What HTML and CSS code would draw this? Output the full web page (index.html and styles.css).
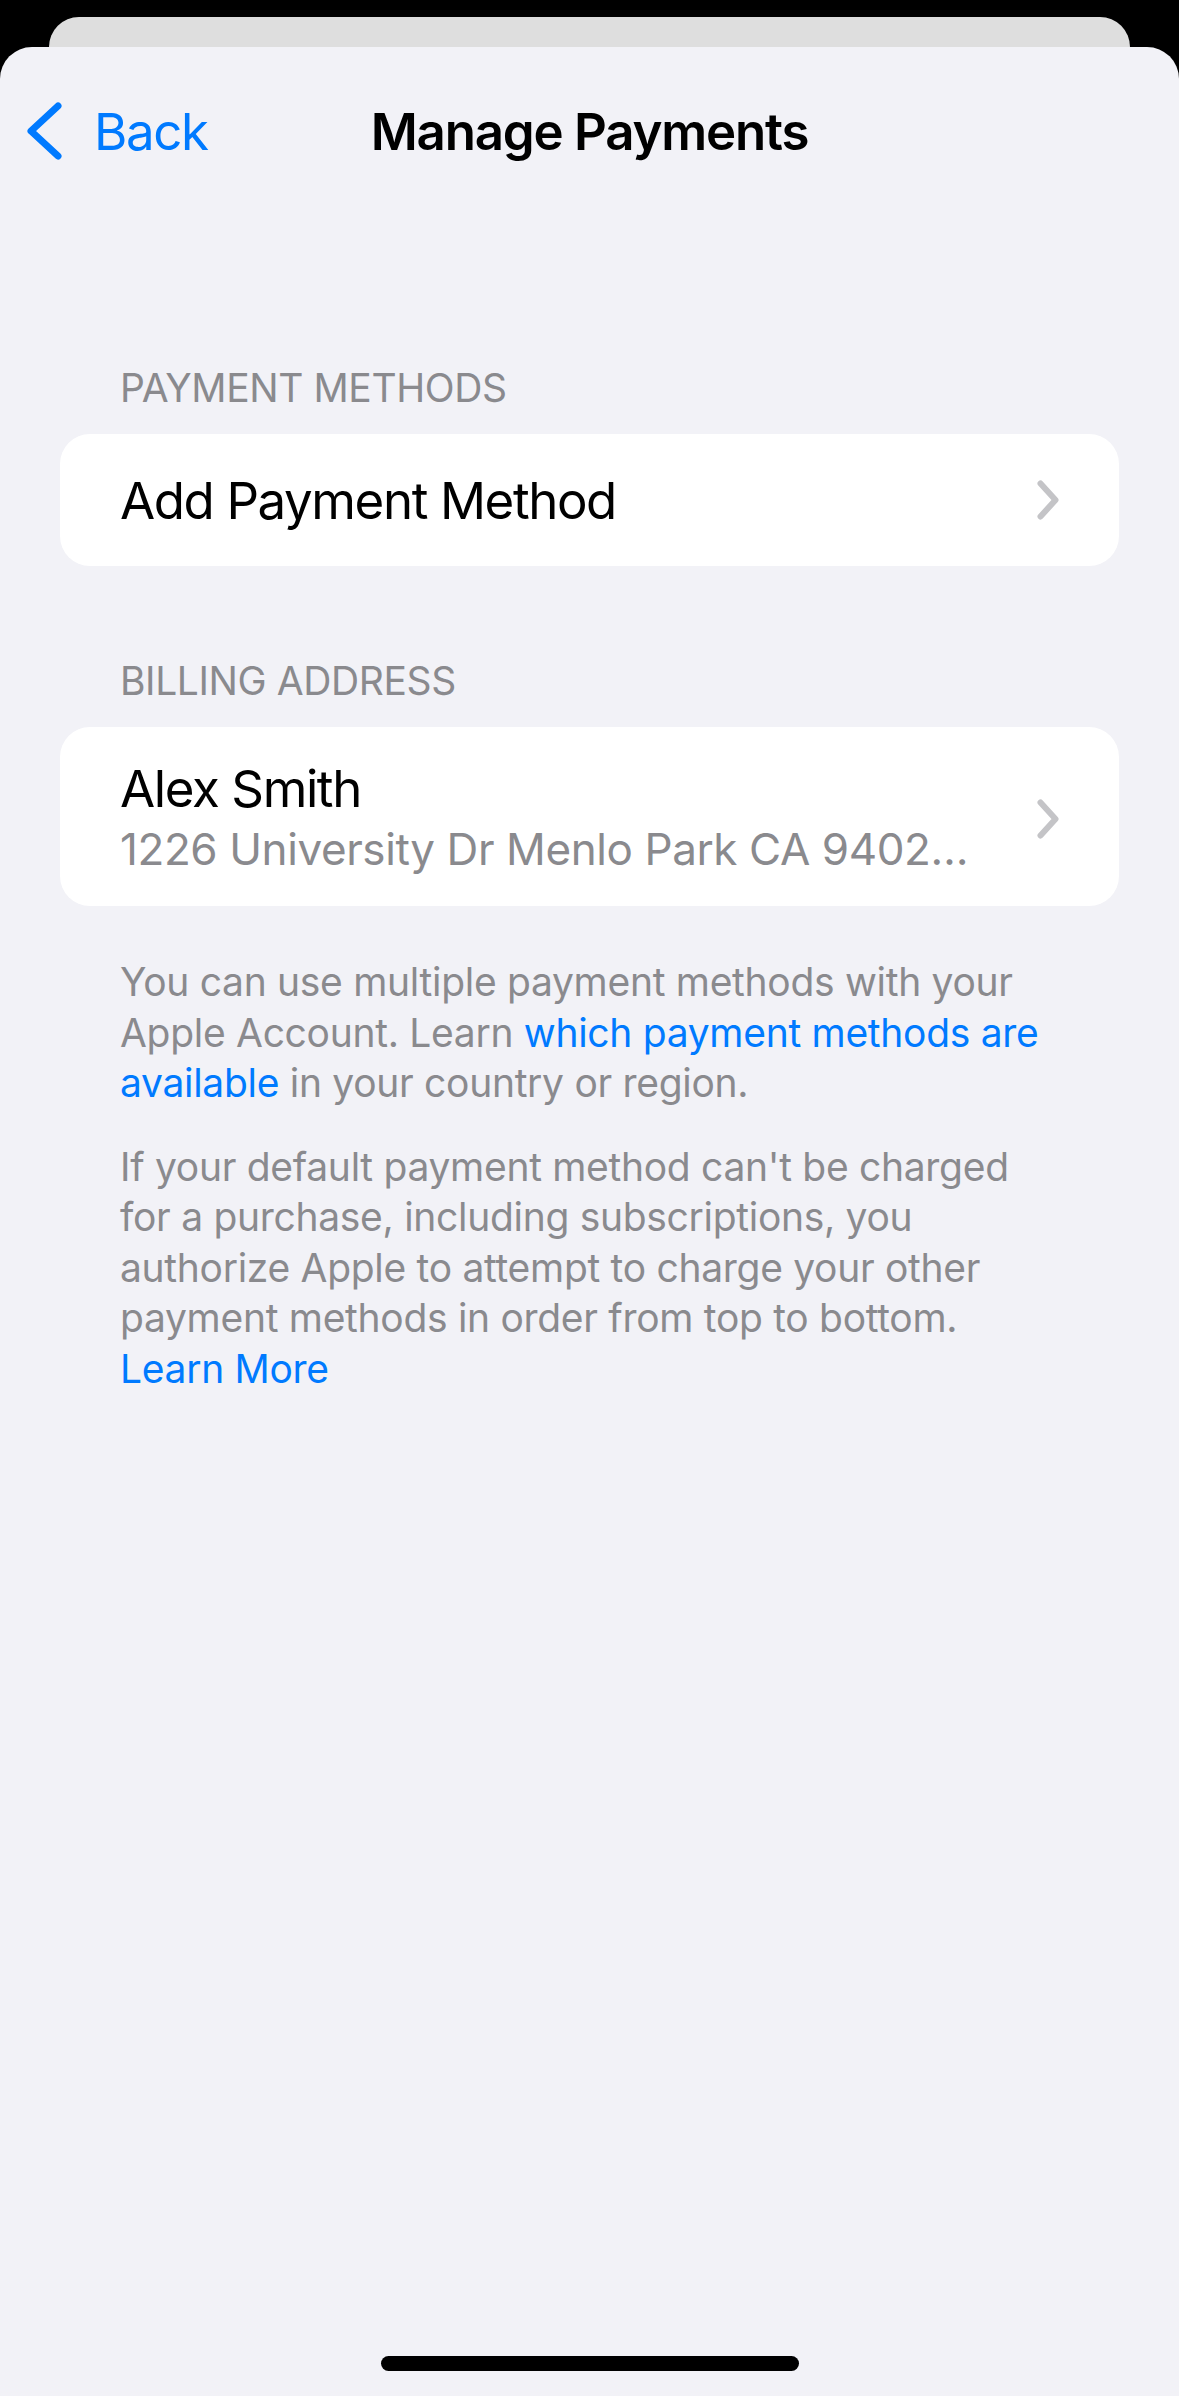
FILE: index.html
```html
<!DOCTYPE html>
<html lang="en">
<head>
    <meta charset="UTF-8">
    <meta name="viewport" content="width=device-width, initial-scale=1.0">
    <title>Manage Payments</title>
    <link rel="stylesheet" href="styles.css">
</head>
<body>
    <div class="back-sheet"></div>
    <div class="sheet">
        <header class="nav">
            <a class="nav-back" href="#">
                <svg class="nav-back-icon" width="40" height="62" viewBox="0 0 40 62">
                    <polyline points="34,6 7,31 34,56" fill="none" stroke="#007aff" stroke-width="7" stroke-linecap="round" stroke-linejoin="round"/>
                </svg>
                <span>Back</span>
            </a>
            <h1 class="nav-title">Manage Payments</h1>
            <span></span>
        </header>

        <main class="content">
            <section class="group">
                <h2 class="group-header">Payment Methods</h2>
                <div class="card">
                    <div class="row">
                        <div class="row-text">
                            <div class="row-title">Add Payment Method</div>
                        </div>
                        <svg class="chevron" width="22" height="40" viewBox="0 0 22 40">
                            <polyline points="3.5,3.5 18.5,20 3.5,36.5" fill="none" stroke="#c4c4c7" stroke-width="6" stroke-linecap="round" stroke-linejoin="round"/>
                        </svg>
                    </div>
                </div>
            </section>

            <section class="group">
                <h2 class="group-header">Billing Address</h2>
                <div class="card">
                    <div class="row two-line">
                        <div class="row-text">
                            <div class="row-title">Alex Smith</div>
                            <div class="row-subtitle">1226 University Dr Menlo Park CA 9402…</div>
                        </div>
                        <svg class="chevron" width="22" height="40" viewBox="0 0 22 40">
                            <polyline points="3.5,3.5 18.5,20 3.5,36.5" fill="none" stroke="#c4c4c7" stroke-width="6" stroke-linecap="round" stroke-linejoin="round"/>
                        </svg>
                    </div>
                </div>
            </section>

            <div class="footer">
                <p>You can use multiple payment methods with your Apple Account. Learn <a href="#">which payment methods are available</a> in your country or region.</p>
                <p>If your default payment method can't be charged for a purchase, including subscriptions, you authorize Apple to attempt to charge your other payment methods in order from top to bottom. <a href="#">Learn More</a></p>
            </div>
        </main>

        <div class="home-indicator"></div>
    </div>
</body>
</html>
```

FILE: styles.css
```css
body {
    margin: 0;
    background-color: #000000;
    font-family: Inter, "Noto Sans", sans-serif;
    color: #000000;
}

.back-sheet {
    height: 30px;
    margin: 17px 49px 0;
    background-color: #dedede;
    border-radius: 30px 30px 0 0;
}

.sheet {
    display: flex;
    flex-direction: column;
    min-height: 2349px;
    background-color: #f2f2f7;
    border-radius: 32px 32px 0 0;
}

/* nav bar */
.nav {
    display: grid;
    grid-template-columns: 1fr auto 1fr;
    align-items: center;
    height: 61px;
    padding-top: 53px;
}
.nav-back {
    display: flex;
    align-items: center;
    padding-left: 24px;
    color: #007aff;
    text-decoration: none;
    font-size: 51px;
    line-height: 61px;
    letter-spacing: -1.4px;
}
.nav-back-icon {
    margin-right: 30px;
}
.nav-title {
    margin: 0;
    font-size: 51px;
    font-weight: 600;
    line-height: 61px;
    letter-spacing: -1.2px;
}

/* grouped list */
.content {
    padding: 203px 60px 0;
}
.group + .group {
    margin-top: 91px;
}
.group-header {
    margin: 0 0 23px 60px;
    font-size: 39px;
    font-weight: 400;
    line-height: 47px;
    letter-spacing: -0.4px;
    color: #8a8a8e;
    text-transform: uppercase;
}
.card {
    background-color: #ffffff;
    border-radius: 30px;
}
.row {
    display: flex;
    align-items: center;
    min-height: 132px;
    padding: 0 60px;
    box-sizing: border-box;
}
.row.two-line {
    padding-top: 31px;
    padding-bottom: 27px;
}
.row-text {
    flex: 1;
    min-width: 0;
}
.row-title {
    font-size: 51px;
    line-height: 61px;
    letter-spacing: -1.4px;
}
.row-subtitle {
    font-size: 44px;
    line-height: 60px;
    letter-spacing: -0.4px;
    color: #8a8a8e;
    white-space: nowrap;
    overflow: hidden;
    text-overflow: ellipsis;
}
.chevron {
    flex-shrink: 0;
    margin-left: 20px;
}

/* footer notes */
.footer {
    margin-top: 51px;
    padding: 0 60px;
    font-size: 39px;
    line-height: 50.5px;
    letter-spacing: -0.3px;
    color: #8a8a8e;
}
.footer p {
    margin: 0;
}
.footer p + p {
    margin-top: 33px;
}
.footer a {
    color: #007aff;
    text-decoration: none;
}

.home-indicator {
    align-self: center;
    width: 418px;
    height: 15px;
    margin-top: auto;
    margin-bottom: 25px;
    background-color: #000000;
    border-radius: 8px;
}
```
